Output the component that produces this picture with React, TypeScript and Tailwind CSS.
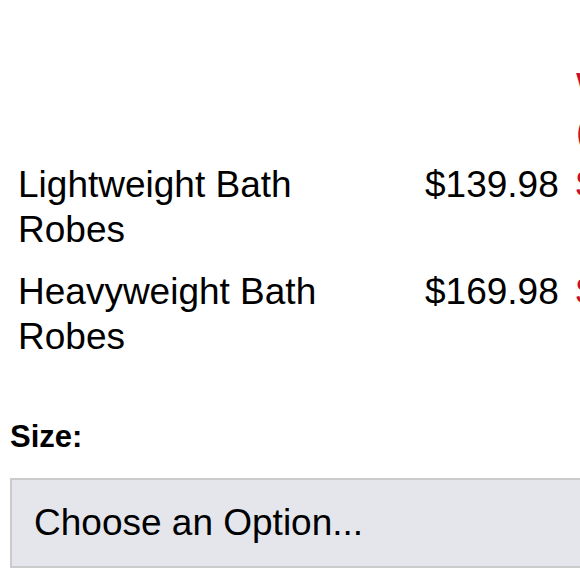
const rows = [
  { name: "Lightweight Bath Robes", price: "$139.98", sale: "$99.98" },
  { name: "Heavyweight Bath Robes", price: "$169.98", sale: "$119.98" },
];

export default function App() {
  return (
    <div className="h-[580px] w-[580px] overflow-hidden bg-white font-['Liberation_Sans',Arial,sans-serif] text-black">
      {/* price table */}
      <div className="pl-[18px] pt-[64px]">
        <div className="mb-[8px] grid grid-cols-[407px_151px_200px] text-[37px] leading-[45px]">
          <div />
          <div />
          <div className="whitespace-nowrap text-[#c8102e]">
            Web
            <br />
            (Sale)
          </div>
        </div>
        {rows.map((r) => (
          <div
            key={r.name}
            className="mb-[17px] grid grid-cols-[407px_151px_200px] text-[37px] leading-[45px]"
          >
            <div className="pr-[100px]">{r.name}</div>
            <div>{r.price}</div>
            <div className="whitespace-nowrap text-[#c8102e]">{r.sale}</div>
          </div>
        ))}
      </div>

      {/* size selector */}
      <div className="mt-[60px] pl-[10px]">
        <p className="text-[31px] font-bold leading-[36px]">Size:</p>
        <div className="mt-[23px] flex h-[90px] w-[600px] items-center border-2 border-[#cbcbcb] bg-[#e4e6eb] pl-[22px] text-[37px]">
          Choose an Option...
        </div>
      </div>
    </div>
  );
}
